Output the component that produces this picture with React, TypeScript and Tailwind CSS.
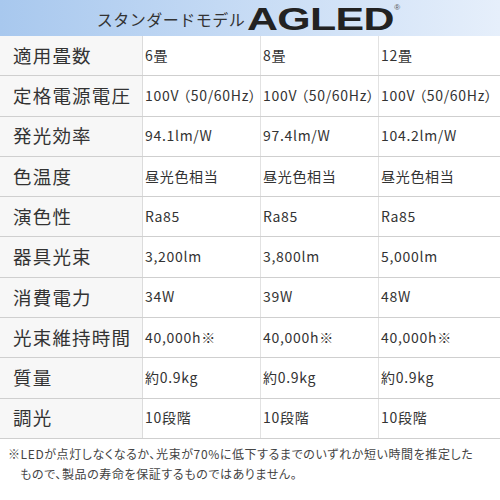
import React from 'react'

const jp = { fontFamily: '"Noto Sans CJK JP", "Noto Sans", sans-serif' }
const palt = { fontFeatureSettings: '"palt"' }

const rows: [string, string, string, string][] = [
  ['適用畳数', '6畳', '8畳', '12畳'],
  ['定格電源電圧', '100V （50/60Hz）', '100V （50/60Hz）', '100V （50/60Hz）'],
  ['発光効率', '94.1lm/W', '97.4lm/W', '104.2lm/W'],
  ['色温度', '昼光色相当', '昼光色相当', '昼光色相当'],
  ['演色性', 'Ra85', 'Ra85', 'Ra85'],
  ['器具光束', '3,200lm', '3,800lm', '5,000lm'],
  ['消費電力', '34W', '39W', '48W'],
  ['光束維持時間', '40,000h※', '40,000h※', '40,000h※'],
  ['質量', '約0.9kg', '約0.9kg', '約0.9kg'],
  ['調光', '10段階', '10段階', '10段階'],
]

export default function App() {
  return (
    <div className="w-[500px] h-[500px] bg-white text-[#333] overflow-hidden" style={jp}>
      <div className="h-[36px] flex items-center justify-center bg-gradient-to-r from-[#a8c8ee] to-[#e6effb]">
        <span className="text-[16px] tracking-[0.5px] text-[#333] mt-[1px]">スタンダードモデル</span>
        <span className="relative ml-[2px] flex items-center w-[152px]">
          <span
            className="inline-block text-[32px] leading-none font-black text-[#222] scale-x-[1.34] origin-left tracking-[-0.5px] mt-[2px]"
            style={{ fontFamily: '"Liberation Sans", Arial, sans-serif' }}
          >
            AGLED
          </span>
          <span
            className="absolute left-[147px] top-[3px] text-[8px] leading-none text-[#555]"
            style={{ fontFamily: '"Liberation Sans", Arial, sans-serif' }}
          >
            ®
          </span>
        </span>
        <span className="w-[4px]" />
      </div>
      <div className="h-[403px] flex flex-col">
        {rows.map((r) => (
          <div key={r[0]} className="flex-1 flex border-b border-[#cfcfcf]">
            <div className="w-[143px] bg-[#f7f7f7] border-r border-[#dcdcdc] flex items-center pl-[13px] text-[18.5px] tracking-[1.2px] text-[#333]">
              {r[0]}
            </div>
            {r.slice(1).map((c, i) => (
              <div
                key={i}
                style={palt}
                className={`${i < 2 ? 'w-[118px] border-r border-[#e2e2e2]' : 'flex-1'} flex items-center pl-[2px] text-[14px] tracking-[0.7px] whitespace-pre text-[#333] pb-[1px]`}
              >
                {c}
              </div>
            ))}
          </div>
        ))}
      </div>
      <div className="pt-[5px] pl-[8px] text-[12px] leading-[20px] tracking-[0.6px] text-[#444]" style={palt}>
        <div>※LEDが点灯しなくなるか、光束が70%に低下するまでのいずれか短い時間を推定した</div>
        <div className="pl-[12px]">もので、製品の寿命を保証するものではありません。</div>
      </div>
    </div>
  )
}
